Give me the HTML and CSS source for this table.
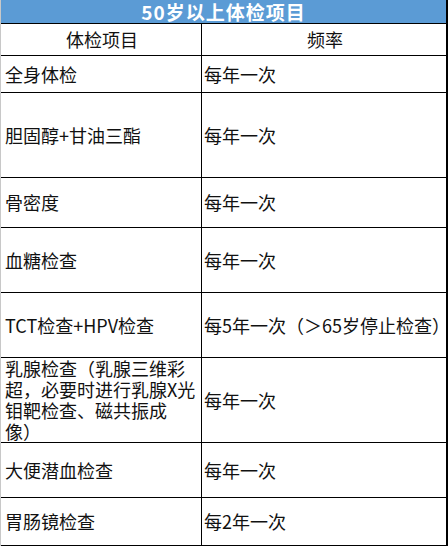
FILE: index.html
```html
<!DOCTYPE html>
<html lang="zh-CN">
<head>
<meta charset="utf-8">
<title>50岁以上体检项目</title>
<link rel="stylesheet" href="styles.css">
</head>
<body>
<div class="sheet">
  <div class="cell title">50岁以上体检项目</div>
  <div class="cell left head">体检项目</div>
  <div class="cell right head">频率</div>
  <div class="cell left">全身体检</div>
  <div class="cell right">每年一次</div>
  <div class="cell left">胆固醇+甘油三酯</div>
  <div class="cell right">每年一次</div>
  <div class="cell left">骨密度</div>
  <div class="cell right">每年一次</div>
  <div class="cell left">血糖检查</div>
  <div class="cell right">每年一次</div>
  <div class="cell left">TCT检查+HPV检查</div>
  <div class="cell right">每5年一次（＞65岁停止检查）</div>
  <div class="cell left multi">乳腺检查（乳腺三维彩超，必要时进行乳腺X光钼靶检查、磁共振成像）</div>
  <div class="cell right">每年一次</div>
  <div class="cell left">大便潜血检查</div>
  <div class="cell right">每年一次</div>
  <div class="cell left">胃肠镜检查</div>
  <div class="cell right">每2年一次</div>
</div>
</body>
</html>
```

FILE: styles.css
```css
html, body {
  margin: 0;
  padding: 0;
  background: #ffffff;
}

body {
  font-family: "Noto Sans CJK SC", "Microsoft YaHei", sans-serif;
  font-size: 18px;
  color: #111111;
}

.sheet {
  width: 448px;
  box-sizing: border-box;
  display: grid;
  grid-template-columns: 201px 244px;
  grid-template-rows: 24px 32px 37px 85px 50px 65px 65px 85px 55px 48px;
  border-left: 1px solid #c8c8c8;
  border-right: 2px solid #000000;
}

.cell {
  box-sizing: border-box;
  display: flex;
  align-items: center;
  border-bottom: 1px solid #000000;
  line-height: 21px;
  min-width: 0;
}

.title {
  grid-column: 1 / span 2;
  justify-content: center;
  background: #5b9bd5;
  color: #ffffff;
  font-weight: bold;
  font-size: 19px;
  letter-spacing: 1px;
}

.left {
  border-right: 1px solid #000000;
  padding: 0 2px 0 4px;
}

.right {
  padding: 0 0 0 2px;
}

.head {
  justify-content: center;
}

.multi {
  text-spacing-trim: space-all;
  padding-right: 3px;
}
```
